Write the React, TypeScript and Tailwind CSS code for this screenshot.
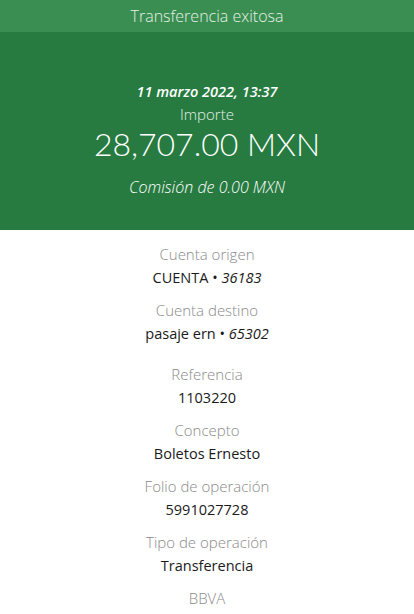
export default function App() {
  const rows = [
    { label: 'Referencia', value: '1103220' },
    { label: 'Concepto', value: 'Boletos Ernesto' },
    { label: 'Folio de operación', value: '5991027728' },
    { label: 'Tipo de operación', value: 'Transferencia' },
  ]

  return (
    <div className="min-h-screen bg-white font-['Open_Sans',sans-serif] text-[14.5px] leading-6">
      {/* Top bar */}
      <div className="h-8 bg-[#3b8e51] flex items-center justify-center text-[#e4f1e6] text-base font-light">
        Transferencia exitosa
      </div>

      {/* Amount */}
      <section className="bg-[#277b41] text-white text-center pt-12 pb-[31px]">
        <div className="italic font-semibold">11 marzo 2022, 13:37</div>
        <div className="text-[#e4f1e6] text-[15px] leading-[21px] font-light">Importe</div>
        <div className="font-['Lato',sans-serif] text-[32px] leading-[38px] font-light">28,707.00 MXN</div>
        <div className="italic font-light text-base mt-[12px]">Comisión de 0.00 MXN</div>
      </section>

      {/* Details */}
      <section className="pt-3 text-center">
        <div className="space-y-2">
          <div>
            <div className="text-[#8a8a8a] text-[15px] font-light">Cuenta origen</div>
            <div className="text-[#1a1a1a]">
              CUENTA • <span className="italic">36183</span>
            </div>
          </div>
          <div>
            <div className="text-[#8a8a8a] text-[15px] font-light">Cuenta destino</div>
            <div className="text-[#1a1a1a]">
              pasaje ern • <span className="italic">65302</span>
            </div>
          </div>
        </div>

        <div className="mt-4 space-y-2">
          {rows.map((row) => (
            <div key={row.label}>
              <div className="text-[#8a8a8a] text-[15px] font-light">{row.label}</div>
              <div className="text-[#1a1a1a]">{row.value}</div>
            </div>
          ))}
          <div className="text-[#8a8a8a] text-[15px] font-light">BBVA</div>
        </div>
      </section>
    </div>
  )
}
